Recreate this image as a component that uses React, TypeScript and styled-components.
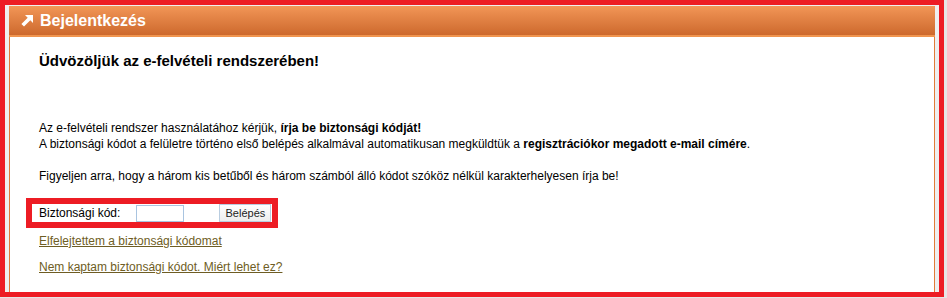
import React from "react";
import styled, { createGlobalStyle } from "styled-components";

const GlobalStyle = createGlobalStyle`
  html, body {
    margin: 0;
    padding: 0;
    background: #e6e6e6;
  }
  body {
    font-family: "Liberation Sans", Arial, sans-serif;
    font-size: 12px;
    color: #000;
  }
`;

const Frame = styled.div`
  box-sizing: border-box;
  width: 944px;
  height: 297px;
  border: 5px solid #ed1c24;
  background: #efefef;
  padding: 1px 4px 0 4px;
  display: flex;
  overflow: hidden;
`;

const Panel = styled.div`
  flex: 1;
  display: flex;
  flex-direction: column;
`;

const Header = styled.div`
  height: 29px;
  display: flex;
  align-items: center;
  gap: 7px;
  padding-left: 12px;
  background: linear-gradient(#f29657, #cd692d);
  border-bottom: 2px solid #f0954f;
  color: #fff;
  font-weight: bold;
  font-size: 16px;
`;

const Content = styled.div`
  flex: 1;
  background: #fff;
  border-left: 1px solid #e07b39;
  border-right: 1px solid #e07b39;
  padding: 16px 30px 0 29px;
  line-height: 16px;
`;

const Title = styled.h1`
  margin: 0;
  font-size: 15px;
  line-height: 16px;
  font-weight: bold;
`;

const Text = styled.p`
  margin: ${(p: { $top?: number }) => p.$top ?? 0}px 0 0 0;
  font-size: 12px;
  line-height: 16px;
`;

const FormBox = styled.div`
  display: inline-flex;
  align-items: center;
  margin: 14px 0 0 -13px;
  height: 18px;
  border: 6px solid #ed1c24;
  padding: 0 1px 0 7px;
  background: #fff;
  font-size: 12px;
`;

const Label = styled.label`
  margin-right: 16px;
`;

const CodeInput = styled.input`
  box-sizing: border-box;
  width: 48px;
  height: 17px;
  border: 1px solid #a9c4e0;
  padding: 0 2px;
  margin: 0 35px 0 0;
  outline: none;
`;

const Button = styled.button`
  box-sizing: border-box;
  width: 52px;
  height: 18px;
  padding: 0;
  border: 1px solid #b9cde0;
  background: linear-gradient(#ffffff, #ededed);
  font-family: "Liberation Sans", Arial, sans-serif;
  font-size: 11px;
  color: #222;
`;

const Links = styled.div`
  display: flex;
  flex-direction: column;
  align-items: flex-start;
  gap: 10px;
  margin-top: 5px;
`;

const Link = styled.a`
  color: #6e5d24;
  text-decoration: underline;
  font-size: 12px;
  line-height: 16px;
`;

const Arrow = () => (
  <svg width="12" height="12" viewBox="0 0 12 12">
    <polygon points="4,0 12,0 12,8 9.3,5.3 3,11.6 0.4,9 6.7,2.7" fill="#fff" />
  </svg>
);

export default function App() {
  return (
    <>
      <GlobalStyle />
      <Frame>
        <Panel>
          <Header>
            <Arrow />
            <span>Bejelentkezés</span>
          </Header>
          <Content>
            <Title>Üdvözöljük az e-felvételi rendszerében!</Title>
            <Text $top={51}>
              Az e-felvételi rendszer használatához kérjük,{" "}
              <b>írja be biztonsági kódját!</b>
              <br />
              A biztonsági kódot a felületre történo első belépés alkalmával
              automatikusan megküldtük a{" "}
              <b>regisztrációkor megadott e-mail címére</b>.
            </Text>
            <Text $top={16}>
              Figyeljen arra, hogy a három kis betűből és három számból álló
              kódot szóköz nélkül karakterhelyesen írja be!
            </Text>
            <FormBox>
              <Label>Biztonsági kód:</Label>
              <CodeInput type="text" />
              <Button>Belépés</Button>
            </FormBox>
            <Links>
              <Link href="#">Elfelejtettem a biztonsági kódomat</Link>
              <Link href="#">Nem kaptam biztonsági kódot. Miért lehet ez?</Link>
            </Links>
          </Content>
        </Panel>
      </Frame>
    </>
  );
}
